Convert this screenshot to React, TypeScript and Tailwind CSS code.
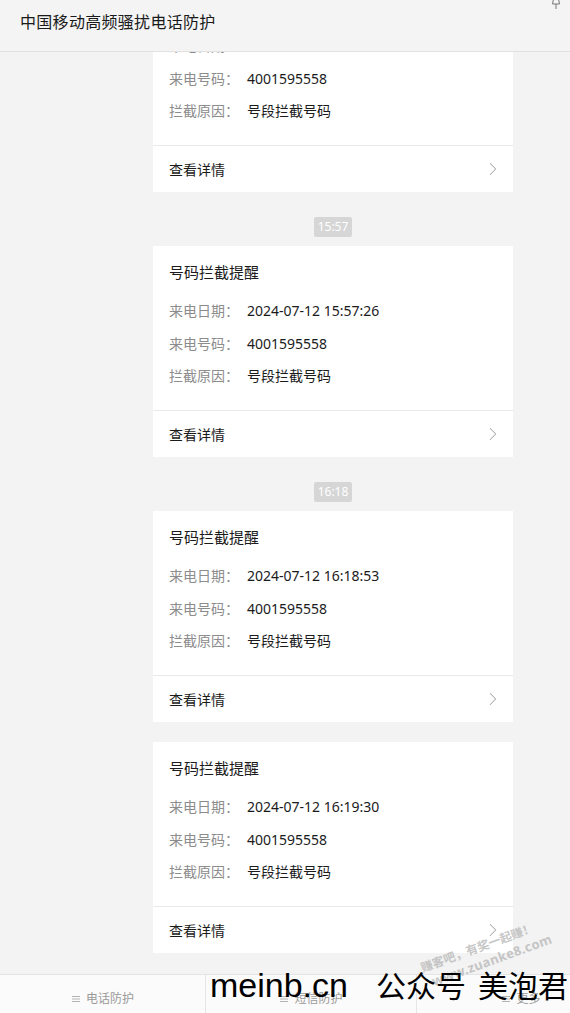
import { ChevronRight } from "lucide-react";

const font = { fontFamily: '"Noto Sans", "Noto Sans CJK SC", sans-serif' };

type Record = { time?: string; date: string };

const records: Record[] = [
	{ date: "2024-07-12 15:51:02" },
	{ time: "15:57", date: "2024-07-12 15:57:26" },
	{ time: "16:18", date: "2024-07-12 16:18:53" },
	{ date: "2024-07-12 16:19:30" },
];

function Row({ label, value }: { label: string; value: string }) {
	return (
		<div className="h-[32.5px] flex items-center text-[14px] leading-5">
			<span className="w-[78px] text-[#8c8c8c]">{label}：</span>
			<span className="text-[#1b1b1b]">{value}</span>
		</div>
	);
}

function Card({ rec, first }: { rec: Record; first?: boolean }) {
	return (
		<div className={`w-[360px] bg-white ${first ? "-mt-[71px]" : ""}`}>
			<div className="pt-4 pb-[17.5px] px-4">
				<div className="h-5 text-[15px] leading-5 text-[#1b1b1b]">号码拦截提醒</div>
				<div className="mt-[13px]">
					<Row label="来电日期" value={rec.date} />
					<Row label="来电号码" value="4001595558" />
					<Row label="拦截原因" value="号段拦截号码" />
				</div>
			</div>
			<div className="h-[47px] border-t border-[#e9e9e9] flex items-center justify-between pl-4 pr-[9px]">
				<span className="text-[14px] text-[#1b1b1b]">查看详情</span>
				<ChevronRight size={22} strokeWidth={1.1} className="text-[#a8a8a8]" />
			</div>
		</div>
	);
}

function Bars() {
	return (
		<svg width="10" height="8" viewBox="0 0 10 8" className="mr-[5px]">
			<path d="M1 1.5h8M1 4h8M1 6.5h8" stroke="#b3b3b3" strokeWidth="1" />
		</svg>
	);
}

export default function App() {
	return (
		<div style={font} className="relative w-[570px] h-[1013px] overflow-hidden bg-[#f3f3f3] flex flex-col">
			<header className="relative h-[52px] shrink-0 border-b border-[#e2e2e2] bg-[#f4f4f4] z-10">
				<h1 className="pl-5 pt-3 text-[16px] leading-5 text-[#1a1a1a] tracking-[0.3px]">中国移动高频骚扰电话防护</h1>
				<svg width="10" height="10" viewBox="0 0 10 10" className="absolute left-[551px] top-0">
					<path d="M2.5 -1 L7.5 -1 L8.5 4 L1.5 4 Z" fill="none" stroke="#777" strokeWidth="1" />
					<path d="M5 4v5" stroke="#777" strokeWidth="1" />
				</svg>
			</header>

			<main className="flex-1 overflow-hidden pl-[153px]">
				{records.map((rec, i) => (
					<div key={i} className="flex flex-col">
						{rec.time ? (
							<div className="w-[360px] flex justify-center mt-[25px] mb-[9px]">
								<span className="h-5 px-[4px] bg-[#d6d6d6] text-white text-[12px] leading-5 rounded-[2px]">{rec.time}</span>
							</div>
						) : i > 0 ? (
							<div className="h-5" />
						) : null}
						<Card rec={rec} first={i === 0} />
					</div>
				))}
			</main>

			<nav className="h-[39px] shrink-0 border-t border-[#e4e4e4] bg-[#fbfbfb] flex w-[625px] text-[12px] leading-4 text-[#9a9a9a]">
				<div className="w-[206px] flex items-start pt-4 justify-center border-r border-[#e6e6e6]"><span className="flex items-center"><Bars />电话防护</span></div>
				<div className="w-[211px] flex items-start pt-4 justify-center border-r border-[#e6e6e6]"><span className="flex items-center"><Bars />短信防护</span></div>
				<div className="w-[208px] flex items-start pt-4 justify-center"><span className="flex items-center"><Bars />更多</span></div>
			</nav>

			{/* faint diagonal watermark */}
			<div className="absolute left-[424px] top-[960px] -rotate-[20deg] origin-left text-[12px] font-bold leading-[16px] text-[#bdbdbd] opacity-85 pointer-events-none">
				<div>赚客吧，有奖一起赚！</div>
				<div className="pl-[6px] text-[13px] tracking-[0.3px]">www.zuanke8.com</div>
			</div>

			{/* big overlay text */}
			<div className="absolute left-[210px] top-[962px] flex items-baseline text-black pointer-events-none">
				<span className="text-[34px] leading-[44px]" style={{ fontFamily: '"Liberation Sans", sans-serif' }}>meinb.cn</span>
				<span className="ml-[28px] text-[30px] leading-[44px]" style={{ fontFamily: '"Noto Sans CJK SC", sans-serif' }}>公众号</span>
				<span className="ml-[12px] text-[30px] leading-[44px]" style={{ fontFamily: '"Noto Sans CJK SC", sans-serif' }}>美泡君</span>
			</div>
		</div>
	);
}
